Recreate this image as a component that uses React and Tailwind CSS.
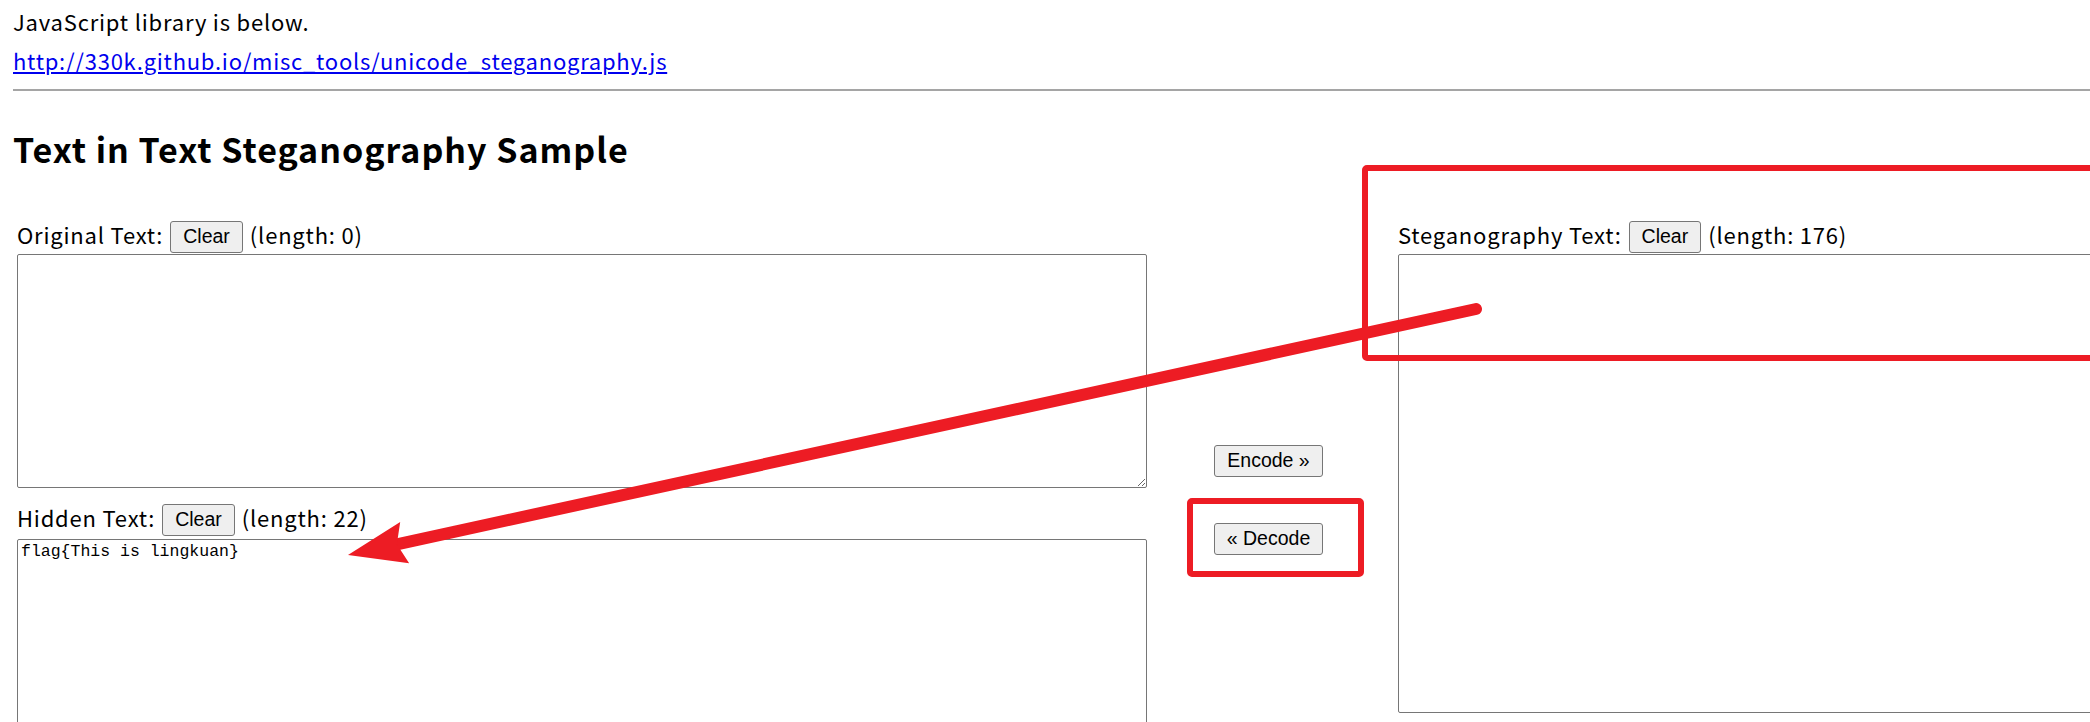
import React from 'react'

const ClearButton = ({ children }) => (
  <button className="h-[32px] px-[12px] border border-[#767676] rounded-[3px] bg-[#efefef] text-[19.5px] leading-none tracking-normal text-black font-['Liberation_Sans',Arial,sans-serif]">
    {children}
  </button>
)

const FieldLabel = ({ title, length }) => (
  <div className="flex items-center h-[34px] gap-[7px] text-[22px] leading-none tracking-[0.8px]">
    <span className="pb-[6px]">{title}</span>
    <ClearButton>Clear</ClearButton>
    <span className="pb-[6px]">(length: {length})</span>
  </div>
)

const Annotations = () => {
  // tip of the arrow and the point where its tail starts
  const tip = [348, 555]
  const start = [1476, 309]
  const dx = tip[0] - start[0]
  const dy = tip[1] - start[1]
  const len = Math.hypot(dx, dy)
  const ux = dx / len
  const uy = dy / len
  const nx = -uy
  const ny = ux
  const headLen = 58
  const half = 21
  const base = [tip[0] - ux * headLen, tip[1] - uy * headLen]
  const notch = [tip[0] - ux * (headLen - 8), tip[1] - uy * (headLen - 8)]
  const w1 = [base[0] + nx * half, base[1] + ny * half]
  const w2 = [base[0] - nx * half, base[1] - ny * half]
  const head = [tip, w1, notch, w2].map((p) => p.join(',')).join(' ')

  return (
    <svg
      className="absolute left-0 top-0 pointer-events-none"
      width="2090"
      height="722"
      viewBox="0 0 2090 722"
    >
      <rect x="1365" y="168" width="800" height="190" rx="2" fill="none" stroke="#ed1c24" strokeWidth="6" />
      <rect x="1190" y="501" width="171" height="73" rx="2" fill="none" stroke="#ed1c24" strokeWidth="6" />
      <line
        x1={start[0]}
        y1={start[1]}
        x2={notch[0]}
        y2={notch[1]}
        stroke="#ed1c24"
        strokeWidth="12"
        strokeLinecap="round"
      />
      <polygon points={head} fill="#ed1c24" />
    </svg>
  )
}

const App = () => {
  return (
    <div className="relative w-[2090px] h-[722px] overflow-hidden bg-white text-black font-['Noto_Sans_CJK_JP','Noto_Sans',sans-serif]">
      <div className="pl-[13px]">
        <p className="pt-[7px] text-[22px] leading-[28px] tracking-[0.8px]">JavaScript library is below.</p>
        <a
          href="#"
          className="block w-fit mt-[11px] text-[22px] leading-[28px] tracking-[0.75px] text-[#0000ee] underline"
        >
          http://330k.github.io/misc_tools/unicode_steganography.js
        </a>
        <div className="mt-[15px] h-[2px] bg-[#a5a5a5]" />
        <h2 className="mt-[38px] text-[34px] leading-[40px] tracking-[1px] font-bold">
          Text in Text Steganography Sample
        </h2>
      </div>

      <div className="flex mt-[51px]">
        {/* left column */}
        <div className="ml-[17px] w-[1130px] shrink-0 flex flex-col">
          <FieldLabel title="Original Text:" length={0} />
          <textarea
            className="block w-full h-[234px] border border-[#767676] rounded-[2px] p-[2px] bg-white"
            defaultValue=""
          />
          <div className="mt-[15px]">
            <FieldLabel title="Hidden Text:" length={22} />
          </div>
          <textarea
            className="block w-full h-[220px] mt-[2px] border border-[#767676] rounded-[2px] px-[3px] py-[2px] bg-white text-[16.5px] leading-[20px] font-['Liberation_Mono',monospace]"
            defaultValue="flag{This is lingkuan}"
          />
        </div>

        {/* middle column */}
        <div className="w-[251px] shrink-0 flex flex-col items-center pt-[225px] pr-[8px] gap-[46px]">
          <ClearButton>Encode »</ClearButton>
          <ClearButton>« Decode</ClearButton>
        </div>

        {/* right column */}
        <div className="w-[760px] shrink-0 flex flex-col">
          <FieldLabel title="Steganography Text:" length={176} />
          <textarea
            className="block w-full h-[459px] border border-[#767676] rounded-[2px] p-[2px] bg-white"
            defaultValue=""
          />
        </div>
      </div>

      <Annotations />
    </div>
  )
}

export default App
